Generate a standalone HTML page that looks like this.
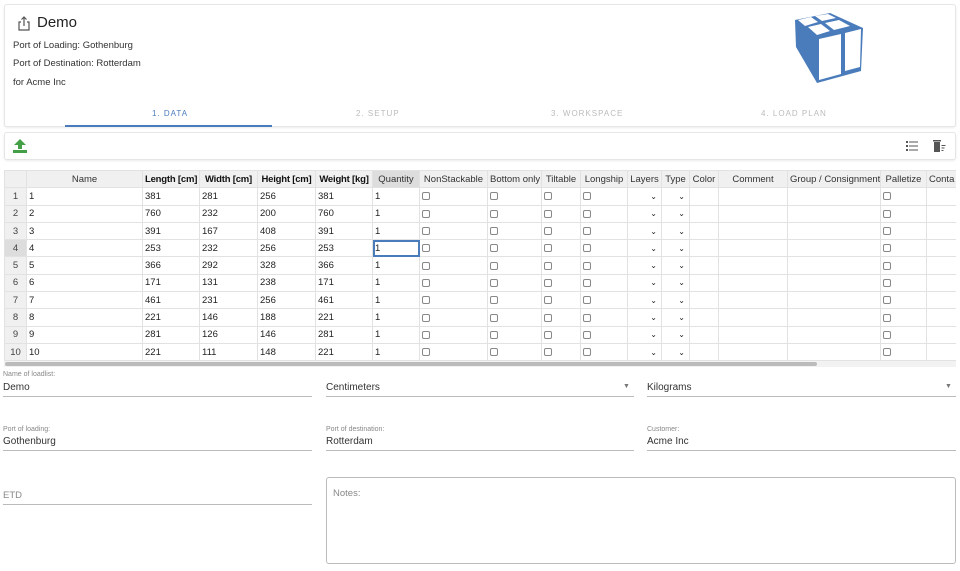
<!DOCTYPE html>
<html><head><meta charset="utf-8"><style>
*{box-sizing:border-box;margin:0;padding:0}
body{width:960px;height:571px;overflow:hidden;background:#fff;font-family:"Liberation Sans",Arial,sans-serif;color:#222;position:relative}
.card{position:absolute;left:4px;width:952px;background:#fff;border:1px solid #e6e6e6;border-radius:3px;box-shadow:0 1px 2px rgba(0,0,0,.08)}
.t{position:absolute;white-space:nowrap}
.wrap{position:absolute;left:4px;top:170px;width:952px;height:191px;overflow:hidden}
table{border-collapse:collapse;table-layout:fixed;font-size:9.5px;width:952px}
td,th{border:1px solid #e2e2e2;height:17.3px;padding:0 2px;overflow:hidden;white-space:nowrap;text-align:left;font-weight:normal}
th{background:#f0f0f0;text-align:center;color:#333}
th.b{font-weight:bold;color:#111;letter-spacing:-0.2px}
td.n{background:#f0f0f0;text-align:center;color:#444}
.cb{display:inline-block;width:8px;height:8px;border:1px solid #888;border-radius:2px;vertical-align:middle}
.ch{text-align:right;font-size:8px;padding-right:4px}
.lbl{position:absolute;font-size:7px;color:#888}
.val{position:absolute;font-size:10px;color:#333}
.line{position:absolute;height:1px;background:#bbb}
.tab{position:absolute;top:109px;font-size:8px;letter-spacing:1px;color:#bbb}
</style></head><body>
<div class="card" style="top:4px;height:123px"></div>
<svg class="t" style="left:17px;top:16px" width="14" height="15" viewBox="0 0 14 15"><path d="M4 6H2v8h10V6H10M7 10V1M4.5 3.5L7 1l2.5 2.5" fill="none" stroke="#555" stroke-width="1.2"/></svg>
<div class="t" style="left:37px;top:14px;font-size:15px;color:#222">Demo</div>
<div class="t" style="left:13px;top:40px;font-size:9.5px;color:#333">Port of Loading: Gothenburg</div>
<div class="t" style="left:13px;top:58px;font-size:9.5px;color:#333">Port of Destination: Rotterdam</div>
<div class="t" style="left:13px;top:77px;font-size:9.5px;color:#333">for Acme Inc</div>
<svg class="t" style="left:794px;top:12px" width="72" height="74" viewBox="0 0 72 74">
<polygon points="1,8 36,1 69,16 67,59 23,71 2,35" fill="#4a7cbb"/>
<polygon points="4,8 17,5 24,10 11,14" fill="#fff"/>
<polygon points="21,4 34,2 42,6 28,9" fill="#fff"/>
<polygon points="14,15 27,12 36,19 23,23" fill="#fff"/>
<polygon points="31,11 45,8 56,14 40,18" fill="#fff"/>
<polygon points="25,27 47,22 47,62 25,68" fill="#fff"/>
<polygon points="51,21 67,17 66,55 51,59" fill="#fff"/>
</svg>
<div class="tab" style="left:152px;color:#4a7cbb">1. DATA</div>
<div style="position:absolute;left:65px;top:125px;width:207px;height:2px;background:#4a7cbb"></div>
<div class="tab" style="left:356px">2. SETUP</div>
<div class="tab" style="left:551px">3. WORKSPACE</div>
<div class="tab" style="left:761px">4. LOAD PLAN</div>
<div class="card" style="top:132px;height:28px"></div>
<svg class="t" style="left:12px;top:138px" width="16" height="16" viewBox="0 0 16 16"><path d="M8 1L2 7h4v4h4V7h4z" fill="#43a047"/><rect x="1" y="12" width="14" height="3" fill="#43a047"/></svg>
<svg class="t" style="left:906px;top:140px" width="12" height="11" viewBox="0 0 12 11"><g fill="#555"><rect x="0" y="1" width="2" height="2"/><rect x="0" y="5" width="2" height="2"/><rect x="0" y="9" width="2" height="2"/><rect x="3" y="1.5" width="9" height="1"/><rect x="3" y="5.5" width="9" height="1"/><rect x="3" y="9.5" width="9" height="1"/></g></svg>
<svg class="t" style="left:933px;top:140px" width="13" height="12" viewBox="0 0 13 12"><g fill="#555"><rect x="0" y="0" width="8" height="1.5"/><rect x="1" y="2" width="6" height="10"/><rect x="8.5" y="5" width="4" height="1"/><rect x="8.5" y="7.5" width="3" height="1"/><rect x="8.5" y="10" width="2" height="1"/></g></svg>
<div class="wrap"><table>
<colgroup><col style="width:22px"><col style="width:116px"><col style="width:57px"><col style="width:58px"><col style="width:58px"><col style="width:57px"><col style="width:47px"><col style="width:68px"><col style="width:54px"><col style="width:39px"><col style="width:47px"><col style="width:34px"><col style="width:28px"><col style="width:29px"><col style="width:69px"><col style="width:93px"><col style="width:46px"><col style="width:30px"></colgroup>
<tr><th></th><th>Name</th><th class="b">Length [cm]</th><th class="b">Width [cm]</th><th class="b">Height [cm]</th><th class="b">Weight [kg]</th><th style="background:#ddd">Quantity</th><th>NonStackable</th><th>Bottom only</th><th>Tiltable</th><th>Longship</th><th>Layers</th><th>Type</th><th>Color</th><th>Comment</th><th>Group / Consignment</th><th>Palletize</th><th style="text-align:left">Conta</th></tr>
<tr><td class="n">1</td><td>1</td><td>381</td><td>281</td><td>256</td><td>381</td><td>1</td><td><span class="cb"></span></td><td><span class="cb"></span></td><td><span class="cb"></span></td><td><span class="cb"></span></td><td class="ch">⌄</td><td class="ch">⌄</td><td></td><td></td><td></td><td><span class="cb"></span></td><td></td></tr>
<tr><td class="n">2</td><td>2</td><td>760</td><td>232</td><td>200</td><td>760</td><td>1</td><td><span class="cb"></span></td><td><span class="cb"></span></td><td><span class="cb"></span></td><td><span class="cb"></span></td><td class="ch">⌄</td><td class="ch">⌄</td><td></td><td></td><td></td><td><span class="cb"></span></td><td></td></tr>
<tr><td class="n">3</td><td>3</td><td>391</td><td>167</td><td>408</td><td>391</td><td>1</td><td><span class="cb"></span></td><td><span class="cb"></span></td><td><span class="cb"></span></td><td><span class="cb"></span></td><td class="ch">⌄</td><td class="ch">⌄</td><td></td><td></td><td></td><td><span class="cb"></span></td><td></td></tr>
<tr><td class="n" style="background:#ddd">4</td><td>4</td><td>253</td><td>232</td><td>256</td><td>253</td><td style="outline:2px solid #4a7cbb;outline-offset:-2px">1</td><td><span class="cb"></span></td><td><span class="cb"></span></td><td><span class="cb"></span></td><td><span class="cb"></span></td><td class="ch">⌄</td><td class="ch">⌄</td><td></td><td></td><td></td><td><span class="cb"></span></td><td></td></tr>
<tr><td class="n">5</td><td>5</td><td>366</td><td>292</td><td>328</td><td>366</td><td>1</td><td><span class="cb"></span></td><td><span class="cb"></span></td><td><span class="cb"></span></td><td><span class="cb"></span></td><td class="ch">⌄</td><td class="ch">⌄</td><td></td><td></td><td></td><td><span class="cb"></span></td><td></td></tr>
<tr><td class="n">6</td><td>6</td><td>171</td><td>131</td><td>238</td><td>171</td><td>1</td><td><span class="cb"></span></td><td><span class="cb"></span></td><td><span class="cb"></span></td><td><span class="cb"></span></td><td class="ch">⌄</td><td class="ch">⌄</td><td></td><td></td><td></td><td><span class="cb"></span></td><td></td></tr>
<tr><td class="n">7</td><td>7</td><td>461</td><td>231</td><td>256</td><td>461</td><td>1</td><td><span class="cb"></span></td><td><span class="cb"></span></td><td><span class="cb"></span></td><td><span class="cb"></span></td><td class="ch">⌄</td><td class="ch">⌄</td><td></td><td></td><td></td><td><span class="cb"></span></td><td></td></tr>
<tr><td class="n">8</td><td>8</td><td>221</td><td>146</td><td>188</td><td>221</td><td>1</td><td><span class="cb"></span></td><td><span class="cb"></span></td><td><span class="cb"></span></td><td><span class="cb"></span></td><td class="ch">⌄</td><td class="ch">⌄</td><td></td><td></td><td></td><td><span class="cb"></span></td><td></td></tr>
<tr><td class="n">9</td><td>9</td><td>281</td><td>126</td><td>146</td><td>281</td><td>1</td><td><span class="cb"></span></td><td><span class="cb"></span></td><td><span class="cb"></span></td><td><span class="cb"></span></td><td class="ch">⌄</td><td class="ch">⌄</td><td></td><td></td><td></td><td><span class="cb"></span></td><td></td></tr>
<tr><td class="n">10</td><td>10</td><td>221</td><td>111</td><td>148</td><td>221</td><td>1</td><td><span class="cb"></span></td><td><span class="cb"></span></td><td><span class="cb"></span></td><td><span class="cb"></span></td><td class="ch">⌄</td><td class="ch">⌄</td><td></td><td></td><td></td><td><span class="cb"></span></td><td></td></tr>
</table></div>
<div style="position:absolute;left:4px;top:361px;width:952px;height:6px;background:#f2f2f2"></div>
<div style="position:absolute;left:5px;top:362px;width:812px;height:4px;background:#bbb;border-radius:2px"></div>
<div class="lbl" style="left:3px;top:371px">Name of loadlist:</div>
<div class="val" style="left:3px;top:382px">Demo</div>
<div class="line" style="left:3px;top:396px;width:309px"></div>
<div class="val" style="left:326px;top:382px">Centimeters</div>
<div class="t" style="left:623px;top:383px;font-size:7px;color:#777">▼</div>
<div class="line" style="left:326px;top:396px;width:308px"></div>
<div class="val" style="left:647px;top:382px">Kilograms</div>
<div class="t" style="left:945px;top:383px;font-size:7px;color:#777">▼</div>
<div class="line" style="left:647px;top:396px;width:309px"></div>
<div class="lbl" style="left:3px;top:426px">Port of loading:</div>
<div class="val" style="left:3px;top:436px">Gothenburg</div>
<div class="line" style="left:3px;top:450px;width:309px"></div>
<div class="lbl" style="left:326px;top:426px">Port of destination:</div>
<div class="val" style="left:326px;top:436px">Rotterdam</div>
<div class="line" style="left:326px;top:450px;width:308px"></div>
<div class="lbl" style="left:647px;top:426px">Customer:</div>
<div class="val" style="left:647px;top:436px">Acme Inc</div>
<div class="line" style="left:647px;top:450px;width:309px"></div>
<div class="val" style="left:3px;top:490px;color:#888;font-size:9.5px">ETD</div>
<div class="line" style="left:3px;top:504px;width:309px"></div>
<div style="position:absolute;left:326px;top:477px;width:630px;height:87px;border:1px solid #bbb;border-radius:3px"></div>
<div class="val" style="left:333px;top:488px;color:#888;font-size:9.5px">Notes:</div>
</body></html>
